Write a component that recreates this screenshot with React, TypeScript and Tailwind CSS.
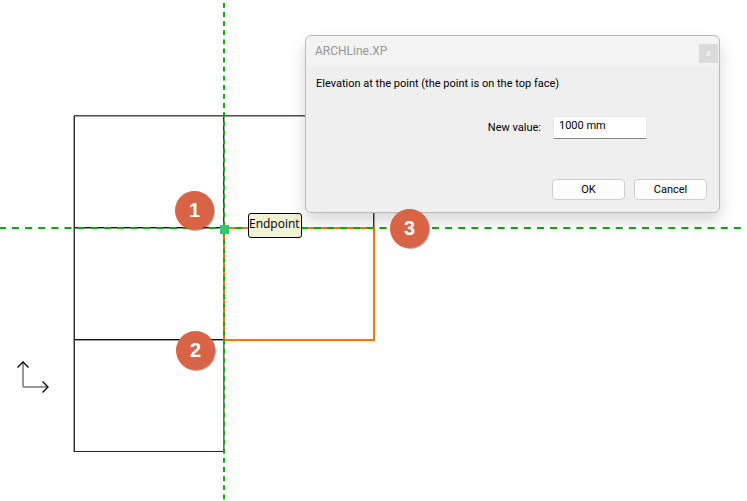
const markers = [
  { label: '1', position: 'left-[175px] top-[191px]' },
  { label: '2', position: 'left-[176px] top-[331px]' },
  { label: '3', position: 'left-[390px] top-[209px]' },
]

function Drawing() {
  return (
    <svg className="absolute inset-0 h-full w-full" fill="none" aria-hidden="true">
      {/* wall outlines */}
      <g shapeRendering="crispEdges">
        <path d="M74 116.5H374M74 228.5H224M74 340.5H224" stroke="#a0a0a0" />
        <path d="M73.5 116V452M224.5 116V452M374.5 213V228" stroke="#a0a0a0" />
        <path d="M74 115.5H374" stroke="#505050" />
        <path d="M74 451.5H224" stroke="#202020" />
        <path d="M74 227.5H224M74 339.5H224" stroke="#101010" />
        <path d="M74.5 115V452M373.5 116V228" stroke="#333" />
        <path d="M223.5 116V228" stroke="#333" />
        <path d="M223.5 340V452" stroke="#707070" />
        <path d="M224 228H374V340H224Z" stroke="#ff7300" strokeWidth="2" />
      </g>
      {/* cursor guides */}
      <path d="M-1.1 228H747" stroke="#00b000" strokeWidth="2" strokeDasharray="7 6.125" />
      <path d="M224 3V501" stroke="#00b000" strokeWidth="2" strokeDasharray="4.8 4.3" />
      <rect x="220" y="225" width="9" height="9" fill="#2ecc71" />
      {/* axes */}
      <path d="M23 387V363M23 387H47" stroke="#777" strokeWidth="1.5" />
      <path d="M17.5 367.5L23 362L28.5 367.5M42.5 381.5L48 387L42.5 392.5" stroke="#000" strokeWidth="1.3" />
    </svg>
  )
}

function ElevationDialog() {
  return (
    <form
      role="dialog"
      aria-labelledby="dialog-title"
      onSubmit={e => e.preventDefault()}
      className="absolute left-[305px] top-[35px] w-[415px] rounded-md border border-[#bababa] bg-[#efefef] font-['Roboto',sans-serif] text-[11px] leading-4 text-black shadow-[0_8px_16px_rgba(0,0,0,0.16)]"
    >
      <header className="flex h-[30px] items-center justify-between rounded-t-md bg-[#f3f3f3] pl-[9px] pr-px">
        <h1 id="dialog-title" className="text-xs text-[#969696]">ARCHLine.XP</h1>
        <button type="button" aria-label="Close" className="mt-1 flex size-[19px] items-center justify-center bg-[#dadada] text-[9px] font-bold leading-3 text-[#f3f3f3]">
          x
        </button>
      </header>
      <div className="px-2.5 pb-3 pt-2.5">
        <p>Elevation at the point (the point is on the top face)</p>
        <div className="mt-6 flex items-center justify-end gap-3 pr-[62px]">
          <label htmlFor="elevation">New value:</label>
          <input
            id="elevation"
            type="text"
            defaultValue="1000 mm"
            className="h-[23px] w-[94px] border border-[#e8e8e8] border-b-[#858585] bg-white px-[5px] pb-1 outline-none"
          />
        </div>
        <div className="mt-10 flex justify-end gap-[9px] pr-0.5">
          <button type="submit" className="h-[21px] w-[73px] rounded border border-[#cecece] bg-[#fdfdfd]">OK</button>
          <button type="button" className="h-[21px] w-[73px] rounded border border-[#cecece] bg-[#fdfdfd]">Cancel</button>
        </div>
      </div>
    </form>
  )
}

export default function App() {
  return (
    <main className="relative min-h-screen overflow-hidden bg-white font-['Open_Sans','Noto_Sans',sans-serif]">
      <Drawing />
      <div className="absolute left-[248px] top-[213px] h-[25px] w-[54px] whitespace-nowrap rounded-[3px] border border-black bg-[#f1f1d4] text-xs leading-5 text-black">
        Endpoint
      </div>
      <ElevationDialog />
      {markers.map(m => (
        <div
          key={m.label}
          className={`absolute flex size-[39px] items-center justify-center rounded-full bg-[#d96345] pb-0.5 font-['Liberation_Sans',sans-serif] text-xl font-bold text-white shadow-[1px_1px_1px_rgba(0,0,0,0.35)] ${m.position}`}
        >
          {m.label}
        </div>
      ))}
    </main>
  )
}
